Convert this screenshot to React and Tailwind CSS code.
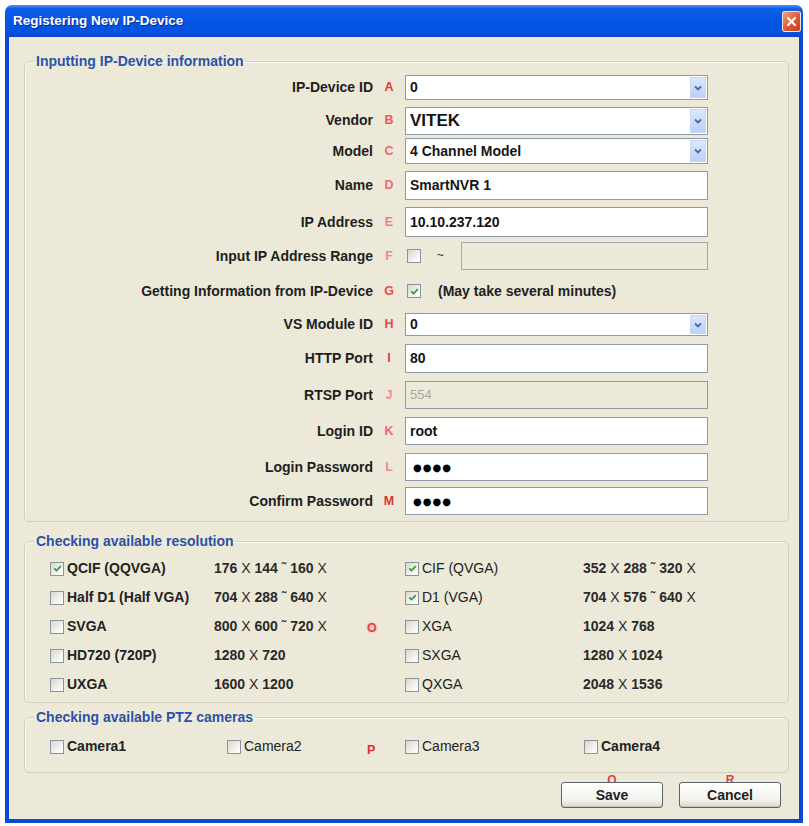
import React from "react";

// Windows XP style "Registering New IP-Device" dialog

const deviceRows = [
  { label: "IP-Device ID", key: "A", h: "h-[25px]", mt: "", kind: "select", value: "0", keyCls: "text-[#e0383a]" },
  { label: "Vendor", key: "B", h: "h-[25px]", mt: "mt-[7px]", kind: "select", value: "VITEK", big: true, keyCls: "text-[#ea5a60]" },
  { label: "Model", key: "C", h: "h-[26px]", mt: "mt-[6px]", kind: "select", value: "4 Channel Model", keyCls: "text-[#ec6a70]" },
  { label: "Name", key: "D", h: "h-[29px]", mt: "mt-[7px]", kind: "text", value: "SmartNVR 1", keyCls: "text-[#ec6a70]" },
  { label: "IP Address", key: "E", h: "h-[30px]", mt: "mt-[7px]", kind: "text", value: "10.10.237.120", keyCls: "text-[#f08080]" },
  { label: "Input IP Address Range", key: "F", h: "h-[28px]", mt: "mt-[5px]", kind: "range", keyCls: "text-[#f28a8a]" },
  { label: "Getting Information from IP-Device", key: "G", h: "h-[26px]", mt: "mt-[8px]", kind: "check", keyCls: "text-[#e84a50]" },
  { label: "VS Module ID", key: "H", h: "h-[23px]", mt: "mt-[9px]", kind: "select", value: "0", keyCls: "text-[#e84a50]" },
  { label: "HTTP Port", key: "I", h: "h-[29px]", mt: "mt-[8px]", kind: "text", value: "80", keyCls: "text-[#e0383a]" },
  { label: "RTSP Port", key: "J", h: "h-[28px]", mt: "mt-[8px]", kind: "disabled", value: "554", keyCls: "text-[#f08a8a]" },
  { label: "Login ID", key: "K", h: "h-[28px]", mt: "mt-[8px]", kind: "text", value: "root", keyCls: "text-[#ec6a70]" },
  { label: "Login Password", key: "L", h: "h-[28px]", mt: "mt-[8px]", kind: "password", keyCls: "text-[#f08a8a]" },
  { label: "Confirm Password", key: "M", h: "h-[28px]", mt: "mt-[6px]", kind: "password", keyCls: "text-[#e0303a]" },
];

const resolutions = [
  [
    { name: "QCIF (QQVGA)", res: ["176", "144", "160"], checked: true, bold: true },
    { name: "CIF (QVGA)", res: ["352", "288", "320"], checked: true },
  ],
  [
    { name: "Half D1 (Half VGA)", res: ["704", "288", "640"], bold: true },
    { name: "D1 (VGA)", res: ["704", "576", "640"], checked: true },
  ],
  [
    { name: "SVGA", res: ["800", "600", "720"], bold: true },
    { name: "XGA", res: ["1024", "768"] },
  ],
  [
    { name: "HD720 (720P)", res: ["1280", "720"], bold: true },
    { name: "SXGA", res: ["1280", "1024"] },
  ],
  [
    { name: "UXGA", res: ["1600", "1200"], bold: true },
    { name: "QXGA", res: ["2048", "1536"] },
  ],
];

function CheckBox({ checked }) {
  return (
    <span className="w-[14px] h-[14px] shrink-0 border border-[#8b949c] bg-[linear-gradient(135deg,#d8d6ce,#f6f6f3_70%,#ffffff)] flex items-center justify-center">
      {checked && (
        <svg width="9" height="9" viewBox="0 0 9 9">
          <path d="M1.3 4.3 L3.5 6.6 L7.8 2.1" fill="none" stroke="#2f9e3a" strokeWidth="1.7" />
        </svg>
      )}
    </span>
  );
}

function ComboBox({ value, big }) {
  return (
    <div className="h-full border border-[#8e9aa8] bg-white flex items-center">
      <span className={`pl-[4px] font-bold text-[#151515] ${big ? "text-[17px]" : "text-[14px]"}`}>{value}</span>
      <div className="ml-auto mr-[1px] w-[16px] h-[calc(100%-2px)] bg-[linear-gradient(180deg,#dde7fd,#bccff8)] border border-[#c8d6f5] flex items-center justify-center">
        <svg width="8" height="6" viewBox="0 0 8 6">
          <path d="M1 1.5 L4 4.5 L7 1.5" fill="none" stroke="#4d6aa0" strokeWidth="1.8" />
        </svg>
      </div>
    </div>
  );
}

function TextBox({ children, disabled }) {
  return (
    <div
      className={`h-full border border-[#8e9aa8] flex items-center pl-[4px] ${
        disabled ? "bg-[#ece9d8]" : "bg-white"
      }`}
    >
      {children}
    </div>
  );
}

function DeviceControl({ row }) {
  if (row.kind === "select") return <ComboBox value={row.value} big={row.big} />;
  if (row.kind === "text")
    return (
      <TextBox>
        <span className="text-[14px] font-bold text-[#151515]">{row.value}</span>
      </TextBox>
    );
  if (row.kind === "disabled")
    return (
      <TextBox disabled>
        <span className="text-[13px] text-[#a8a8a0]">{row.value}</span>
      </TextBox>
    );
  if (row.kind === "password")
    return (
      <TextBox>
        <span className="pl-[3px] text-[10px] tracking-[1px] text-black font-['DejaVu_Sans',sans-serif]">●●●●</span>
      </TextBox>
    );
  if (row.kind === "range")
    return (
      <div className="h-full flex items-center">
        <span className="ml-[2px]">
          <CheckBox />
        </span>
        <span className="ml-[16px] self-start mt-[4px] text-[12px] text-[#333]">~</span>
        <div className="ml-auto w-[247px] h-full border border-[#a2a8ad] bg-[#ece9d8]" />
      </div>
    );
  return (
    <div className="h-full flex items-center">
      <span className="ml-[2px]">
        <CheckBox checked />
      </span>
      <span className="ml-[17px] text-[14px] font-bold text-[#222]">(May take several minutes)</span>
    </div>
  );
}

function Group({ title, className, children }) {
  return (
    <fieldset className={`border border-[#d0cebf] rounded-[5px] shadow-[inset_1px_1px_0_#f8f7f0] ${className}`}>
      <legend className="ml-[9px] px-[2px] text-[14px] leading-[18px] font-bold text-[#2b52a6]">{title}</legend>
      {children}
    </fieldset>
  );
}

function Resolution({ res }) {
  return (
    <span className="text-[14px] font-bold text-[#2a2a2a] whitespace-nowrap">
      {res[0]}
      <span className="font-normal"> X </span>
      {res[1]}
      {res[2] && (
        <>
          <span className="font-normal"> ˜ </span>
          {res[2]}
          <span className="font-normal"> X</span>
        </>
      )}
    </span>
  );
}

function Option({ name, checked, bold }) {
  return (
    <span className="flex items-center gap-[3px]">
      <CheckBox checked={checked} />
      <span className={`text-[14px] text-[#222] whitespace-nowrap ${bold ? "font-bold" : "font-normal"}`}>{name}</span>
    </span>
  );
}

function Key({ children, className }) {
  return <span className={`text-[12.5px] font-bold ${className}`}>{children}</span>;
}

export default function App() {
  return (
    <div className="w-[809px] h-[826px] bg-white pt-[5px] pl-[5px] font-['Liberation_Sans',Arial,sans-serif]">
      <div className="w-[798px] h-[818px] flex flex-col rounded-t-[7px] overflow-hidden">
        {/* title bar */}
        <div className="h-[32px] shrink-0 flex items-center pl-[8px] pr-[2px] bg-[linear-gradient(180deg,#4a95f6_0%,#0d5ee9_12%,#0556e6_45%,#0352e2_85%,#1245c6_100%)]">
          <span className="text-[13.5px] font-bold text-white [text-shadow:1px_1px_0_#0a2a8a]">Registering New IP-Device</span>
          <div className="ml-auto w-[19px] h-[21px] rounded-[3px] border border-white/80 bg-[linear-gradient(135deg,#f0a080,#d85a32_55%,#c04422)] flex items-center justify-center">
            <svg width="11" height="11" viewBox="0 0 11 11">
              <path d="M2 2 L9 9 M9 2 L2 9" stroke="white" strokeWidth="2.2" strokeLinecap="round" />
            </svg>
          </div>
        </div>

        {/* client area */}
        <div className="flex-1 flex flex-col bg-[#ece9d8] border-x-4 border-b-4 border-[#0b48d6] pl-[15px] pr-[10px]">
          <Group title="Inputting IP-Device information" className="mt-[15px] pt-[5px] pb-[6px]">
            <div className="flex flex-col">
              {deviceRows.map((row) => (
                <div key={row.key} className={`grid grid-cols-[348px_32px_303px] items-center ${row.h} ${row.mt}`}>
                  <span className="text-right text-[14px] font-bold text-[#1e1e1e] whitespace-nowrap">{row.label}</span>
                  <span className="flex justify-center">
                    <Key className={row.keyCls}>{row.key}</Key>
                  </span>
                  <div className="h-full">
                    <DeviceControl row={row} />
                  </div>
                </div>
              ))}
            </div>
          </Group>

          <Group title="Checking available resolution" className="mt-[10px] pt-[4px] pb-[3px]">
            <div className="pl-[25px] grid grid-cols-[164px_146px_45px_178px_1fr] auto-rows-[29px] items-center">
              {resolutions.map(([left, right], i) => (
                <React.Fragment key={left.name}>
                  <Option {...left} />
                  <Resolution res={left.res} />
                  <span className="pl-[7px]">
                    {i === 2 && <Key className="text-[#e84048] [text-shadow:0_0_3px_#f5a0a0]">O</Key>}
                  </span>
                  <Option {...right} />
                  <Resolution res={right.res} />
                </React.Fragment>
              ))}
            </div>
          </Group>

          <Group title="Checking available PTZ cameras" className="mt-[5px] pt-[6px] pb-[11px]">
            <div className="pl-[25px] grid grid-cols-[177px_139px_39px_179px_1fr] h-[29px] items-center">
              <Option name="Camera1" bold />
              <Option name="Camera2" />
              <span className="pl-[1px] self-start mt-[5px]">
                <Key className="text-[#e0303a]">P</Key>
              </span>
              <Option name="Camera3" />
              <Option name="Camera4" bold />
            </div>
          </Group>

          {/* dialog buttons */}
          <div className="mt-[1px] flex justify-end gap-[16px] pr-[8px]">
            {[
              ["Q", "Save"],
              ["R", "Cancel"],
            ].map(([k, text]) => (
              <div key={text} className="flex flex-col items-center">
                <span className="h-[10px] leading-[12px] text-[12px] font-bold text-[#e04048]">{k}</span>
                <button className="relative -mt-[2px] w-[102px] h-[26px] rounded-[3px] border border-[#5a6470] bg-[linear-gradient(180deg,#ffffff,#f2f1ea_70%,#dcdad0)] text-[14px] font-bold text-[#1e1e1e] shadow-[inset_0_-1px_0_#c8c6bc]">
                  {text}
                </button>
              </div>
            ))}
          </div>
        </div>
      </div>
    </div>
  );
}
